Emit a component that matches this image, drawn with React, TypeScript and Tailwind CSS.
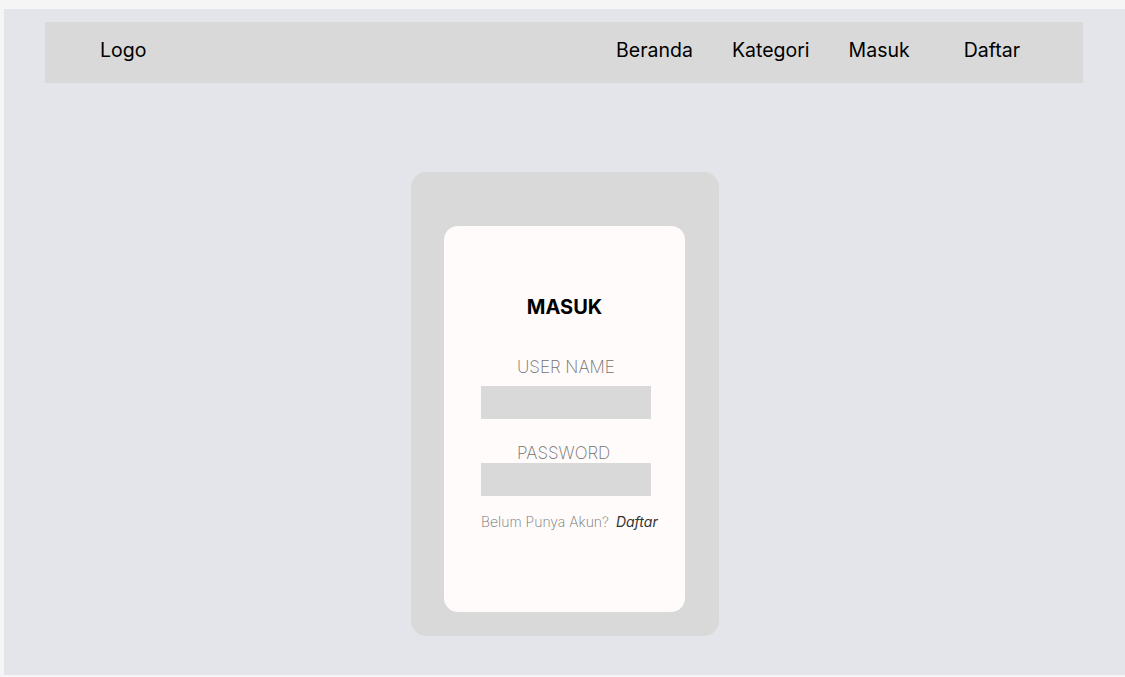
export default function App() {
  return (
    <div className="min-h-screen bg-[#f5f5f6] pt-[9px] pl-[4px] font-['Inter','Noto_Sans',sans-serif]">
      <div className="h-[666px] bg-[#e4e5ea] pt-[13px] pl-[41px]">
        {/* Navbar */}
        <nav className="flex h-[61px] w-[1038px] items-center bg-[#d9d9d9] pb-[3px] pl-[55px] pr-[63px] text-[19.5px] text-black">
          <span>Logo</span>
          <div className="ml-auto flex items-center">
            <span>Beranda</span>
            <span className="ml-[39px]">Kategori</span>
            <span className="ml-[39px]">Masuk</span>
            <span className="ml-[54px]">Daftar</span>
          </div>
        </nav>

        {/* Login card */}
        <div className="ml-[366px] mt-[89px] h-[464px] w-[308px] rounded-[15px] bg-[#d9d9d9] pl-[33px] pt-[54px]">
          <div className="flex h-[386px] w-[241px] flex-col rounded-[14px] bg-[#fefbfa] pt-[69px]">
            <h1 className="text-center text-[20px] font-bold leading-[24px] text-black">MASUK</h1>

            <label className="ml-[73px] mt-[40px] text-[17px] font-extralight leading-[17px] text-[#707070]">
              USER NAME
            </label>
            <div className="ml-[37px] mt-[10px] h-[33px] w-[170px] bg-[#d9d9d9]" />

            <label className="ml-[73px] mt-[26px] text-[17px] font-extralight leading-[17px] text-[#707070]">
              PASSWORD
            </label>
            <div className="ml-[37px] mt-[1px] h-[33px] w-[170px] bg-[#d9d9d9]" />

            <p className="ml-[37px] mt-[17px] text-[14px] leading-[18px]">
              <span className="font-extralight text-[#707070]">Belum Punya Akun?</span>
              <span className="ml-[7px] italic text-[#333]">Daftar</span>
            </p>
          </div>
        </div>
      </div>
    </div>
  );
}
